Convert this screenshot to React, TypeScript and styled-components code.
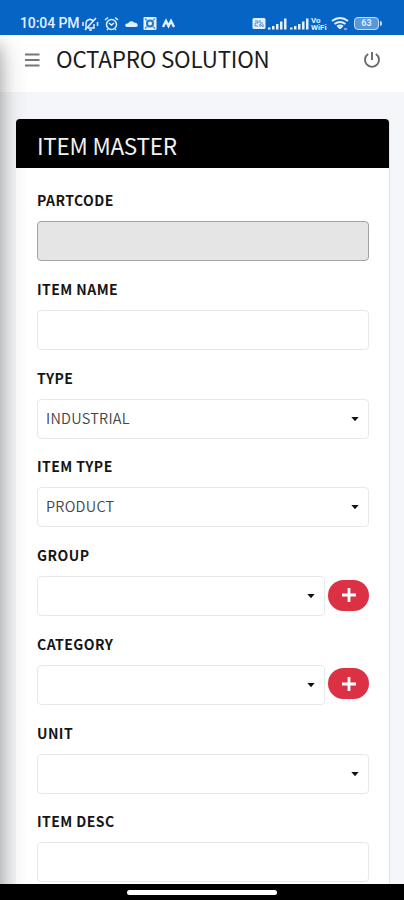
import React from "react";
import styled, { createGlobalStyle } from "styled-components";

const Global = createGlobalStyle`
  *, *::before, *::after { box-sizing: border-box; }
  html, body { margin: 0; padding: 0; background: #000; overflow: hidden; }
  body { font-family: "Noto Sans CJK SC", "Noto Sans", sans-serif; }
`;

const Screen = styled.div`
  width: 404px;
  height: 900px;
  display: flex;
  flex-direction: column;
  overflow: hidden;
  background: #f4f6f9;
`;

const StatusBar = styled.header`
  flex: 0 0 35px;
  display: flex;
  justify-content: space-between;
  padding: 15px 25px 0 20px;
  background: #0664c5;
  color: #e4f0ff;
`;

const StatusGroup = styled.div<{ $gap: number }>`
  display: flex;
  align-items: center;
  height: 17px;
  gap: ${(p) => p.$gap}px;
`;

const Clock = styled.span`
  width: 58px;
  margin-right: -1px;
  font: 500 14px/17px Roboto, sans-serif;
  letter-spacing: -0.1px;
  white-space: nowrap;
`;

const Page = styled.main`
  position: relative;
  flex: 1 1 0;
  min-height: 0;
  overflow: hidden;
`;

const SidebarEdge = styled.aside`
  position: absolute;
  z-index: 2;
  top: 0;
  bottom: -60px;
  left: -250px;
  width: 250px;
  pointer-events: none;
  box-shadow: 0 14px 28px rgba(0, 0, 0, 0.25), 0 10px 14px rgba(0, 0, 0, 0.22);
`;

const NavBar = styled.nav`
  display: flex;
  align-items: center;
  height: 57px;
  padding: 0 23px 8px 25px;
  background: #fff;
`;

const Brand = styled.h1`
  flex: 1;
  margin: -4px 0 0 16px;
  font-size: 22.4px;
  line-height: 32px;
  font-weight: 400;
  letter-spacing: -0.2px;
  color: #1b1b1b;
  white-space: nowrap;
`;

const Card = styled.section`
  margin: 27px 14px 0 16px;
  height: 900px;
  border-right: 1px solid #e0e2e5;
  border-radius: 4px;
  background: #fff;
`;

const CardHeader = styled.header`
  height: 49px;
  padding: 9px 21px 0;
  border-radius: 4px 4px 0 0;
  background: #000;
`;

const CardTitle = styled.h2`
  margin: 0;
  font-size: 22.5px;
  line-height: 34px;
  font-weight: 400;
  letter-spacing: -0.25px;
  color: #f2f2f2;
  white-space: nowrap;
`;

const Form = styled.form`
  padding: 20.4px 20px 0 21px;
`;

const Field = styled.div`
  height: 88.7px;
`;

const Label = styled.label`
  display: block;
  height: 33px;
  font-size: 14px;
  line-height: 24px;
  font-weight: 700;
  letter-spacing: 0.45px;
  color: #151515;
`;

const ControlRow = styled.div`
  display: flex;
  align-items: center;
  gap: 3px;
`;

const Control = styled.div<{ $disabled?: boolean }>`
  flex: 1;
  display: flex;
  align-items: center;
  justify-content: space-between;
  height: 40px;
  padding: 0 9px 0 8px;
  border: 1px solid ${(p) => (p.$disabled ? "#a3a3a3" : "#e8e8e8")};
  border-radius: 4px;
  background: ${(p) => (p.$disabled ? "#e5e5e5" : "#fff")};
`;

const Value = styled.span`
  margin-top: -2px;
  font-size: 14.5px;
  line-height: 22px;
  font-weight: 350;
  letter-spacing: 0.25px;
  color: #444;
`;

const AddButton = styled.button`
  display: flex;
  align-items: center;
  justify-content: center;
  width: 41px;
  height: 31px;
  margin-top: -2px;
  padding: 0;
  border: 0;
  border-radius: 16px;
  background: #dc3045;
`;

const GestureBar = styled.footer`
  flex: 0 0 16px;
  display: flex;
  justify-content: center;
  padding-top: 6px;
  background: #000;
`;

const GestureHandle = styled.div`
  width: 150px;
  height: 5px;
  border-radius: 3px;
  background: #fff;
`;

const MutedBell = () => (
  <svg width="17" height="16" viewBox="0 0 17 16" fill="none" stroke="currentColor" strokeWidth="1.5">
    <path d="M4 11V7a4 4 0 0 1 7.5-1.5M6 12h6V8M3 12h2M7 14h3M3 14 14 2M1 6v4M15.500 6v4" />
  </svg>
);
const Alarm = () => (
  <svg width="15" height="16" viewBox="0 0 15 16" fill="none" stroke="currentColor" strokeWidth="1.5">
    <circle cx="7.500" cy="8.500" r="5" />
    <path d="M1 4 4 1.500M14 4l-3-2.500M5 7l2.500 2L10 7M4 13l-1 1M11 13l1 1" />
  </svg>
);
const Cloud = () => (
  <svg width="13" height="16" viewBox="0 0 13 16" fill="currentColor">
    <path d="M2 11a1.800 1.800 0 0 1 0-3.600h1a3.600 3.600 0 0 1 6-.8c2.200 0 3.700 1.400 3.700 2.700S12 11 11 11z" />
  </svg>
);
const AppBadge = () => (
  <svg width="14" height="16" viewBox="0 0 14 16">
    <rect x=".5" y="1" width="13" height="13" rx="1" fill="currentColor" />
    <circle cx="7" cy="7.500" r="3" fill="none" stroke="#2877bd" strokeWidth="2" />
    <path d="m2 2.500 2 2M12 2.500l-2 2M2 12.500l2-2M12 12.500l-2-2" stroke="#4b94d9" strokeWidth="1.400" />
  </svg>
);
const Peaks = () => (
  <svg width="13" height="16" viewBox="0 0 13 16" fill="none" stroke="currentColor" strokeWidth="2.400">
    <path d="M1 11 4 5l2.500 5L9 5l3 6" />
  </svg>
);
const SimBadge = () => (
  <svg width="14" height="16" viewBox="0 0 14 16">
    <rect x=".5" y="2" width="13" height="11" rx="1.500" fill="currentColor" />
    <path d="M3 5h3v2H3v3h3M8 4v3h3M8 11V8l3 3V8" fill="none" stroke="#4c8dd3" />
  </svg>
);
const Signal = () => (
  <svg width="19" height="16" viewBox="0 0 19 16" fill="currentColor">
    <path d="M0 11.500h2.500v2H0zM4 10h2.500v3.500H4zM8 8h2.500v5.500H8zM12 5.500h2.500v8H12zM16 2.500h2.500v11H16z" />
  </svg>
);
const CallBadge = styled.span`
  width: 17px;
  font: 700 8px/7px Roboto, sans-serif;
  white-space: pre;
`;
const Wifi = () => (
  <svg width="18" height="16" viewBox="0 0 18 16" fill="none" stroke="currentColor" strokeWidth="2">
    <path d="M1 5q8-6 16 0M3.500 8q5.500-4 11 0M6 10.500q3-2 6 0" />
    <path d="M7 11h4l-2 2zM13 13h3" strokeWidth="1" fill="currentColor" />
  </svg>
);
const BatteryShell = styled.span`
  position: relative;
  width: 25px;
  height: 13px;
  margin: -1px 0 0 3px;
  border: 1.5px solid #c4dcf7;
  border-radius: 4px;
  background: #5797da;
  color: #d9eaff;
  font: 700 9px/11px Roboto, sans-serif;
  text-align: center;
  &::after {
    content: "";
    position: absolute;
    right: -4px;
    top: 3px;
    width: 2px;
    height: 5px;
    border-radius: 0 2px 2px 0;
    background: #c4dcf7;
  }
`;
const MenuIcon = () => (
  <svg width="15" height="14" viewBox="0 0 15 14" stroke="#777" strokeWidth="1.800">
    <path d="M0 1.500h14.500M0 7h14.500M0 12.500h14.500" />
  </svg>
);
const PowerIcon = () => (
  <svg width="18" height="18" viewBox="0 0 18 18" fill="none" stroke="#686868" strokeWidth="1.900">
    <path d="M9 1v8M5.200 3a7 7 0 1 0 7.600 0" />
  </svg>
);
const Caret = () => (
  <svg width="8" height="6" viewBox="0 0 8 6">
    <path d="M.3 1h7.400L4 5.300z" fill="#111" />
  </svg>
);
const Plus = () => (
  <svg width="16" height="16" viewBox="0 0 16 16" stroke="#fff" strokeWidth="2.800">
    <path d="M8 1v14M1 8h14" />
  </svg>
);

type FieldSpec = { label: string; value?: string; select?: boolean; add?: boolean; disabled?: boolean };

const fields: FieldSpec[] = [
  { label: "PARTCODE", disabled: true },
  { label: "ITEM NAME" },
  { label: "TYPE", value: "INDUSTRIAL", select: true },
  { label: "ITEM TYPE", value: "PRODUCT", select: true },
  { label: "GROUP", select: true, add: true },
  { label: "CATEGORY", select: true, add: true },
  { label: "UNIT", select: true },
  { label: "ITEM DESC" },
];

export default function App() {
  return (
    <Screen>
      <Global />
      <StatusBar>
        <StatusGroup $gap={5.2}>
          <Clock>10:04 PM</Clock>
          <MutedBell />
          <Alarm />
          <Cloud />
          <AppBadge />
          <Peaks />
        </StatusGroup>
        <StatusGroup $gap={2.5}>
          <SimBadge />
          <Signal />
          <Signal />
          <CallBadge>{"Vo\nWiFi"}</CallBadge>
          <Wifi />
          <BatteryShell>63</BatteryShell>
        </StatusGroup>
      </StatusBar>
      <Page>
        <SidebarEdge />
        <NavBar>
          <MenuIcon />
          <Brand>OCTAPRO SOLUTION</Brand>
          <PowerIcon />
        </NavBar>
        <Card>
          <CardHeader>
            <CardTitle>ITEM MASTER</CardTitle>
          </CardHeader>
          <Form>
            {fields.map((f) => (
              <Field key={f.label}>
                <Label>{f.label}</Label>
                <ControlRow>
                  <Control $disabled={f.disabled}>
                    <Value>{f.value}</Value>
                    {f.select && <Caret />}
                  </Control>
                  {f.add && (
                    <AddButton type="button" aria-label={`Add ${f.label.toLowerCase()}`}>
                      <Plus />
                    </AddButton>
                  )}
                </ControlRow>
              </Field>
            ))}
          </Form>
        </Card>
      </Page>
      <GestureBar>
        <GestureHandle />
      </GestureBar>
    </Screen>
  );
}
